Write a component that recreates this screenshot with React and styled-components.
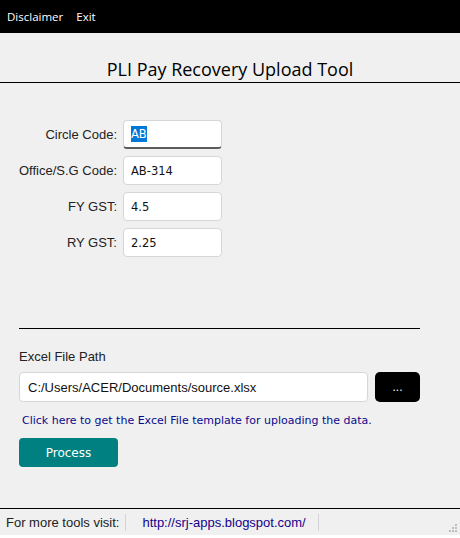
import React from "react";
import styled, { createGlobalStyle } from "styled-components";

const Global = createGlobalStyle`
  html, body { margin: 0; padding: 0; background: #ffffff; }
  #root { width: 460px; height: 538px; }
`;

const Window = styled.div`
  width: 460px;
  height: 535px;
  background: #f0f0f0;
  display: flex;
  flex-direction: column;
  font-family: "Liberation Sans", Arial, sans-serif;
  color: #222;
`;

const MenuBar = styled.div`
  height: 33px;
  background: #000;
  display: flex;
  align-items: center;
  padding-left: 7px;
  gap: 13px;
`;

const MenuItem = styled.span`
  color: #fff;
  font-family: "Open Sans", sans-serif;
  font-size: 11.5px;
  margin-top: -1px;
`;

const Title = styled.h1`
  margin: 0;
  height: 50px;
  box-sizing: border-box;
  border-bottom: 1px solid #000;
  display: flex;
  align-items: flex-end;
  justify-content: center;
  padding-bottom: 1px;
  font-family: "Open Sans", sans-serif;
  font-weight: 400;
  font-size: 18px;
  color: #000;
`;

const Form = styled.div`
  display: grid;
  grid-template-columns: 117px 99px;
  column-gap: 6px;
  row-gap: 7px;
  padding-top: 37px;
  align-items: center;
`;

const Label = styled.label`
  text-align: right;
  font-size: 13px;
  color: #222;
`;

const Field = styled.div`
  height: 29px;
  box-sizing: border-box;
  background: #fff;
  border: 1px solid #d6d6d6;
  border-bottom: ${(p) => (p.$focused ? "2px solid #5c5c5c" : "1px solid #d6d6d6")};
  border-radius: 4px;
  display: flex;
  align-items: center;
  padding-left: 7px;
  font-family: "DejaVu Sans", Tahoma, sans-serif;
  font-size: 11.5px;
  color: #111;
`;

const Selected = styled.span`
  background: #0078d7;
  color: #fff;
  padding: 1px 0;
`;

const Divider = styled.hr`
  margin: 71px 40px 0 19px;
  border: none;
  border-top: 1px solid #000;
  height: 0;
`;

const Section = styled.div`
  padding: 0 40px 0 19px;
  display: flex;
  flex-direction: column;
`;

const SectionLabel = styled.div`
  margin-top: 20px;
  font-size: 13px;
  color: #222;
`;

const PathRow = styled.div`
  margin-top: 8px;
  display: flex;
  gap: 7px;
`;

const PathField = styled(Field)`
  flex: 1;
  height: 30px;
  padding-left: 8px;
  font-family: "Liberation Sans", Arial, sans-serif;
  font-size: 13px;
`;

const BrowseButton = styled.button`
  width: 45px;
  height: 30px;
  background: #000;
  color: #fff;
  border: none;
  border-radius: 5px;
  font-size: 12px;
  padding: 0;
`;

const TemplateLink = styled.a`
  margin-top: 12px;
  margin-left: 3px;
  font-family: "DejaVu Sans", Tahoma, sans-serif;
  font-size: 11px;
  line-height: 14px;
  color: #0a0a8c;
  text-decoration: none;
`;

const ProcessButton = styled.button`
  margin-top: 10px;
  width: 99px;
  height: 29px;
  background: #008080;
  color: #fff;
  border: none;
  border-radius: 4px;
  font-family: "DejaVu Sans", Tahoma, sans-serif;
  font-size: 12px;
`;

const StatusBar = styled.div`
  margin-top: auto;
  height: 27px;
  box-sizing: border-box;
  border-top: 1px solid #000;
  display: flex;
  align-items: center;
  position: relative;
  font-size: 13px;
`;

const StatusCell = styled.div`
  padding: 0 ${(p) => p.$pr || 6}px 0 ${(p) => p.$pl || 6}px;
  height: 17px;
  display: flex;
  align-items: center;
  border-right: 1px solid #d4d4d4;
  color: ${(p) => p.$color || "#222"};
`;

const Grip = styled.svg`
  position: absolute;
  right: 2px;
  bottom: 2px;
`;

export default function App() {
  return (
    <>
      <Global />
      <Window>
        <MenuBar>
          <MenuItem>Disclaimer</MenuItem>
          <MenuItem>Exit</MenuItem>
        </MenuBar>
        <Title>PLI Pay Recovery Upload Tool</Title>
        <Form>
          <Label>Circle Code:</Label>
          <Field $focused>
            <Selected>AB</Selected>
          </Field>
          <Label>Office/S.G Code:</Label>
          <Field>AB-314</Field>
          <Label>FY GST:</Label>
          <Field>4.5</Field>
          <Label>RY GST:</Label>
          <Field>2.25</Field>
        </Form>
        <Divider />
        <Section>
          <SectionLabel>Excel File Path</SectionLabel>
          <PathRow>
            <PathField>C:/Users/ACER/Documents/source.xlsx</PathField>
            <BrowseButton>...</BrowseButton>
          </PathRow>
          <TemplateLink>Click here to get the Excel File template for uploading the data.</TemplateLink>
          <div>
            <ProcessButton>Process</ProcessButton>
          </div>
        </Section>
        <StatusBar>
          <StatusCell>For more tools visit:</StatusCell>
          <StatusCell $pl={16} $pr={12} $color="#14008a">http://srj-apps.blogspot.com/</StatusCell>
          <Grip width="10" height="10" viewBox="0 0 10 10">
            <g fill="#bdbdbd">
              <rect x="7" y="1" width="2" height="2" />
              <rect x="4" y="4" width="2" height="2" />
              <rect x="7" y="4" width="2" height="2" />
              <rect x="1" y="7" width="2" height="2" />
              <rect x="4" y="7" width="2" height="2" />
              <rect x="7" y="7" width="2" height="2" />
            </g>
          </Grip>
        </StatusBar>
      </Window>
    </>
  );
}
